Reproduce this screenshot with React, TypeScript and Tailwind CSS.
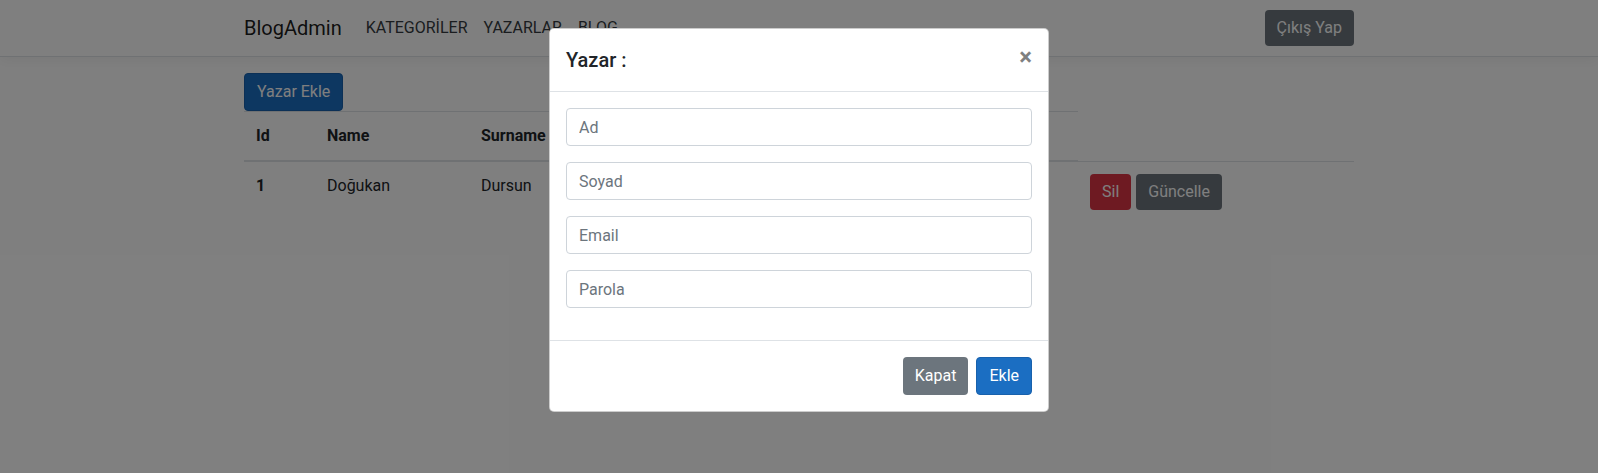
import { useState } from 'react';

const yazarlar = [
  { id: 1, ad: 'Doğukan', soyad: 'Dursun', email: 'dogukan@mail.com', parola: '123456' },
];

const fields = ['Ad', 'Soyad', 'Email', 'Parola'];

export default function App() {
  const [open, setOpen] = useState(true);

  return (
    <div className="relative min-h-[473px] bg-white font-['Roboto','Noto_Sans',sans-serif] text-[16px] leading-6 text-[#212529]">
      {/* navbar */}
      <nav className="mb-4 border-b border-[#dee2e6] bg-white px-4 py-2 shadow-[0_4px_12px_rgba(0,0,0,0.05)]">
        <div className="mx-auto flex h-10 max-w-[1140px] items-center px-[15px]">
          <a className="mr-4 py-[5px] text-[20px] leading-[30px] text-black/90">BlogAdmin</a>
          <ul className="flex">
            <li className="px-2 py-2 text-[#343a40]">KATEGORİLER</li>
            <li className="px-2 py-2 text-[#343a40]">YAZARLAR</li>
            <li className="px-2 py-2 text-[#343a40]">BLOG</li>
          </ul>
          <button className="ml-auto rounded bg-[#6c757d] px-3 py-[6px] text-white">Çıkış Yap</button>
        </div>
      </nav>

      {/* içerik */}
      <main className="mx-auto max-w-[1140px] px-[15px]">
        <button
          onClick={() => setOpen(true)}
          className="rounded border border-[#1861ac] bg-[#1b6ec2] px-3 py-[6px] text-white"
        >
          Yazar Ekle
        </button>
        <table className="w-full table-fixed border-collapse">
          <thead>
            <tr>
              <th className="w-[71px] border-t border-b-2 border-[#dee2e6] p-3 text-left align-bottom">Id</th>
              <th className="w-[154px] border-t border-b-2 border-[#dee2e6] p-3 text-left align-bottom">Name</th>
              <th className="w-[120px] border-t border-b-2 border-[#dee2e6] p-3 text-left align-bottom">Surname</th>
              <th className="w-[250px] border-t border-b-2 border-[#dee2e6] p-3 text-left align-bottom">Email</th>
              <th className="w-[239px] border-t border-b-2 border-[#dee2e6] p-3 text-left align-bottom">Password</th>
            </tr>
          </thead>
          <tbody>
            {yazarlar.map((y) => (
              <tr key={y.id}>
                <th className="border-t border-[#dee2e6] p-3 text-left align-top">{y.id}</th>
                <td className="border-t border-[#dee2e6] p-3 align-top">{y.ad}</td>
                <td className="border-t border-[#dee2e6] p-3 align-top">{y.soyad}</td>
                <td className="border-t border-[#dee2e6] p-3 align-top">{y.email}</td>
                <td className="border-t border-[#dee2e6] p-3 align-top">{y.parola}</td>
                <td className="border-t border-[#dee2e6] p-3 align-top">
                  <div className="flex gap-[5px]">
                    <button className="rounded bg-[#dc3545] px-3 py-[6px] text-white">Sil</button>
                    <button className="rounded bg-[#6c757d] px-3 py-[6px] text-white">Güncelle</button>
                  </div>
                </td>
              </tr>
            ))}
          </tbody>
        </table>
      </main>

      {/* modal */}
      {open && (
        <div className="absolute inset-0 bg-black/50">
          <div className="mx-auto mt-7 w-[500px] rounded-[5px] border border-black/20 bg-white">
            <div className="flex items-start border-b border-[#dee2e6] p-4">
              <h5 className="text-[20px] font-medium leading-[30px]">Yazar :</h5>
              <button
                onClick={() => setOpen(false)}
                className="-m-4 ml-auto p-4 text-[24px] font-bold leading-none text-black/50"
              >
                ×
              </button>
            </div>
            <div className="p-4">
              {fields.map((f) => (
                <div key={f} className="mb-4">
                  <input
                    placeholder={f}
                    className="block h-[38px] w-full rounded border border-[#ced4da] px-3 py-[6px] text-[16px] text-[#495057] placeholder:text-[#6c757d]"
                  />
                </div>
              ))}
            </div>
            <div className="flex justify-end border-t border-[#dee2e6] p-3">
              <button
                onClick={() => setOpen(false)}
                className="m-1 rounded bg-[#6c757d] px-3 py-[7px] text-white"
              >
                Kapat
              </button>
              <button className="m-1 rounded border border-[#1861ac] bg-[#1b6ec2] px-3 py-[6px] text-white">Ekle</button>
            </div>
          </div>
        </div>
      )}
    </div>
  );
}
